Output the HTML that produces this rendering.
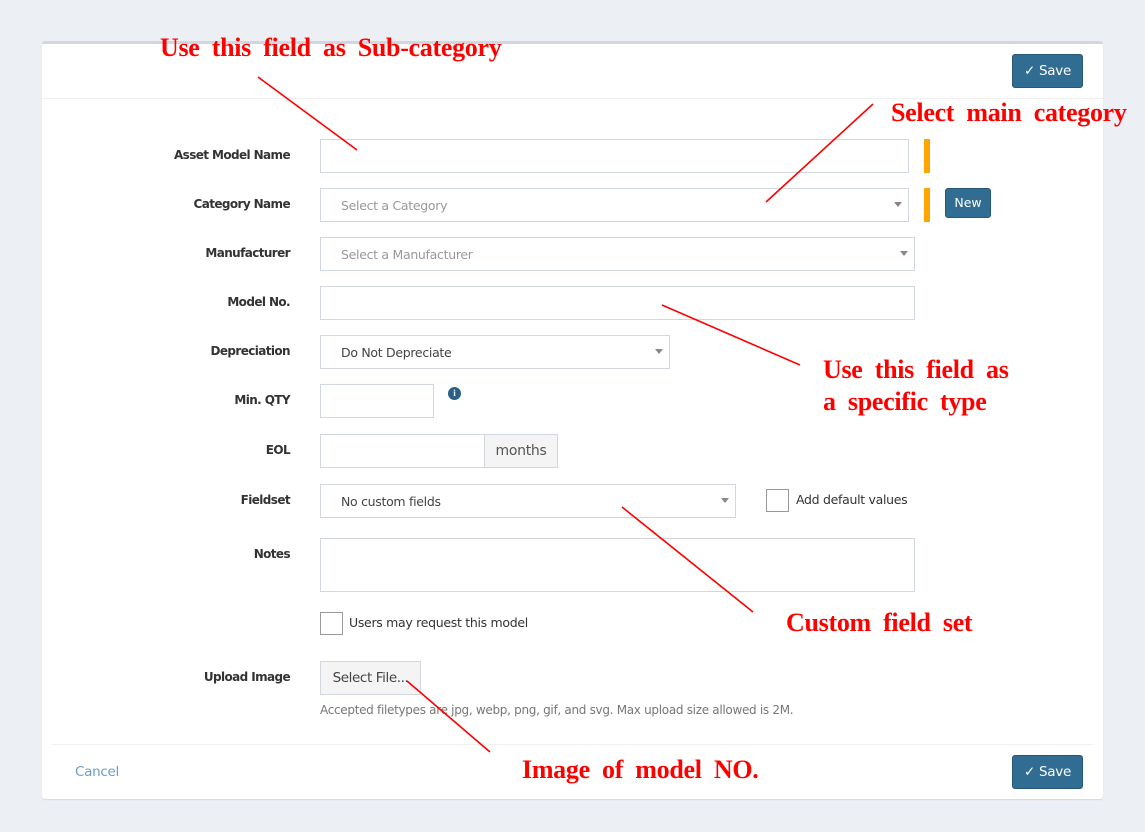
<!DOCTYPE html>
<html><head><meta charset="utf-8"><style>
*{box-sizing:border-box;margin:0;padding:0}
body{width:1145px;height:832px;background:#ecf0f5;position:relative;overflow:hidden;font-family:"DejaVu Sans","Liberation Sans",sans-serif;font-size:13px;color:#333}
.abs{position:absolute}
.panel{left:42px;top:41px;width:1061px;height:758px;background:#fff;border-top:3px solid #d2d6de;border-radius:3px;box-shadow:0 1px 1px rgba(0,0,0,.1)}
.lbl{position:absolute;right:855px;font-weight:bold;font-size:12px;color:#333;text-align:right;white-space:nowrap;letter-spacing:-0.6px}
.inp{position:absolute;border:1px solid #d2d6de;background:#fff}
.ph{position:absolute;left:20px;top:9px;font-size:12.5px;color:#999;letter-spacing:-0.3px}
.val{color:#444}
.caret{position:absolute;right:6px;top:13px;width:0;height:0;border-left:4px solid transparent;border-right:4px solid transparent;border-top:5px solid #888}
.btn{position:absolute;background:#316c92;border:1px solid #255776;border-radius:3px;color:#fff;text-align:center}
.bar{position:absolute;width:6px;background:#ffa500}
.ann{position:absolute;font-family:"Liberation Serif",serif;font-weight:bold;color:#f00;font-size:26px;word-spacing:6px;white-space:nowrap;letter-spacing:-0.3px;line-height:30px}
.cb{position:absolute;width:23px;height:23px;border:1px solid #999;background:#fff}
.t{position:absolute;font-size:12.5px;white-space:nowrap;letter-spacing:-0.3px}
</style></head><body>
<div class="abs panel"></div>
<div class="abs" style="left:42px;top:98px;width:1061px;height:1px;background:#f0f0f0"></div>
<div class="abs" style="left:52px;top:744px;width:1041px;height:1px;background:#f0f0f0"></div>

<div class="btn" style="left:1012px;top:54px;width:71px;height:34px;line-height:32px;font-size:13.5px;letter-spacing:-0.3px">✓ Save</div>
<div class="btn" style="left:1012px;top:755px;width:71px;height:34px;line-height:32px;font-size:13.5px;letter-spacing:-0.3px">✓ Save</div>
<div class="t" style="left:75px;top:764px;color:#6d9dc5;font-size:13.5px">Cancel</div>

<div class="lbl" style="top:148px">Asset Model Name</div>
<div class="inp" style="left:320px;top:139px;width:589px;height:34px"></div>
<div class="bar" style="left:924px;top:139px;height:34px"></div>

<div class="lbl" style="top:197px">Category Name</div>
<div class="inp" style="left:320px;top:188px;width:589px;height:34px"><span class="ph">Select a Category</span><span class="caret"></span></div>
<div class="bar" style="left:924px;top:188px;height:34px"></div>
<div class="btn" style="left:945px;top:188px;width:46px;height:30px;line-height:28px;font-size:12.5px">New</div>

<div class="lbl" style="top:246px">Manufacturer</div>
<div class="inp" style="left:320px;top:237px;width:595px;height:34px"><span class="ph">Select a Manufacturer</span><span class="caret"></span></div>

<div class="lbl" style="top:295px">Model No.</div>
<div class="inp" style="left:320px;top:286px;width:595px;height:34px"></div>

<div class="lbl" style="top:344px">Depreciation</div>
<div class="inp" style="left:320px;top:335px;width:350px;height:34px"><span class="ph val">Do Not Depreciate</span><span class="caret"></span></div>

<div class="lbl" style="top:393px">Min. QTY</div>
<div class="inp" style="left:320px;top:384px;width:114px;height:34px"></div>
<div class="abs" style="left:448px;top:387px;width:13px;height:13px;border-radius:50%;background:#2b5f85;color:#fff;font-size:9px;font-weight:bold;text-align:center;line-height:13px;font-family:'Liberation Serif',serif">i</div>

<div class="lbl" style="top:443px">EOL</div>
<div class="inp" style="left:320px;top:434px;width:165px;height:34px"></div>
<div class="inp" style="left:484px;top:434px;width:74px;height:34px;background:#f4f4f4;text-align:center;line-height:32px;font-size:14px;color:#555;letter-spacing:-0.3px">months</div>

<div class="lbl" style="top:493px">Fieldset</div>
<div class="inp" style="left:320px;top:484px;width:416px;height:34px"><span class="ph val">No custom fields</span><span class="caret"></span></div>
<div class="cb" style="left:766px;top:489px"></div>
<div class="t" style="left:796px;top:492px">Add default values</div>

<div class="lbl" style="top:547px">Notes</div>
<div class="inp" style="left:320px;top:538px;width:595px;height:54px"></div>

<div class="cb" style="left:320px;top:612px"></div>
<div class="t" style="left:349px;top:615px">Users may request this model</div>

<div class="lbl" style="top:670px">Upload Image</div>
<div class="inp" style="left:320px;top:661px;width:101px;height:34px;background:#f4f4f4;text-align:center;line-height:32px;font-size:13.5px;color:#444;letter-spacing:-0.4px">Select File...</div>
<div class="t" style="left:320px;top:703px;color:#777;font-size:12px">Accepted filetypes are jpg, webp, png, gif, and svg. Max upload size allowed is 2M.</div>

<svg class="abs" style="left:0;top:0" width="1145" height="832">
<g stroke="#f00" stroke-width="1.6">
<line x1="258" y1="77" x2="357" y2="150"/>
<line x1="873" y1="104" x2="766" y2="202"/>
<line x1="662" y1="305" x2="800" y2="365"/>
<line x1="622" y1="507" x2="753" y2="612"/>
<line x1="407" y1="681" x2="490" y2="752"/>
</g></svg>

<div class="ann" style="left:160px;top:33px">Use this field as Sub-category</div>
<div class="ann" style="left:891px;top:98px">Select main category</div>
<div class="ann" style="left:823px;top:355px">Use this field as</div>
<div class="ann" style="left:823px;top:387px">a specific type</div>
<div class="ann" style="left:786px;top:608px">Custom field set</div>
<div class="ann" style="left:522px;top:755px">Image of model NO.</div>
</body></html>
